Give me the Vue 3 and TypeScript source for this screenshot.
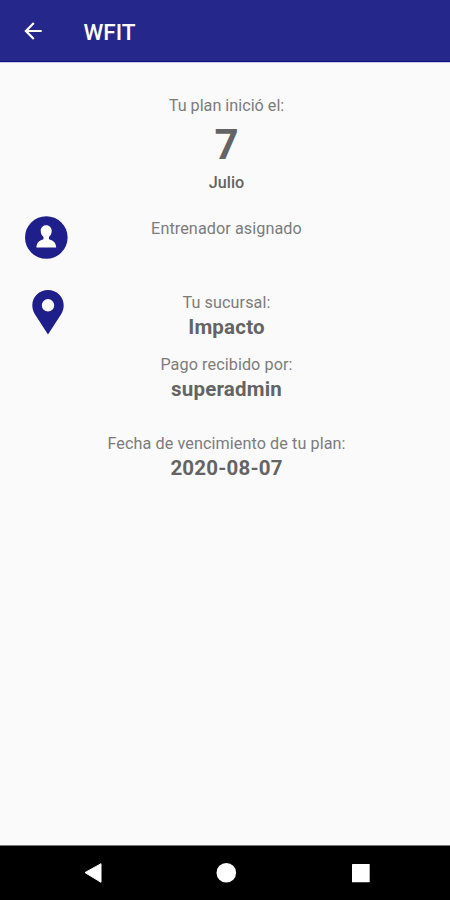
<script setup lang="ts">
const title: string = 'WFIT'
</script>

<template>
  <div class="screen">
    <header class="bar">
      <svg class="back" viewBox="0 0 24 24"><path d="M20 11H7.830l5.590-5.590L12 4l-8 8 8 8 1.410-1.410L7.830 13H20z" /></svg>
      <h1>{{ title }}</h1>
    </header>
    <main>
      <section class="start">
        <p class="label">Tu plan inició el:</p>
        <p class="day">7</p>
        <p class="month">Julio</p>
      </section>
      <section class="row trainer">
        <svg class="user" viewBox="0 0 43 43">
          <circle cx="21.300" cy="21.500" r="21.300" fill="#1f1f8b" />
          <path fill="#fff" d="M21.200 9.300c3.400 0 5.500 2.400 5.500 5.800 0 2.500-1.200 4.700-2.700 5.900v2.200c3.700 1.100 6.900 2.700 7.200 8.300H11.400c.3-5.600 3.400-7.200 7.100-8.300v-2.200c-1.600-1.200-2.800-3.400-2.800-5.900 0-3.400 2.100-5.800 5.500-5.800z" />
        </svg>
        <p class="label">Entrenador asignado</p>
      </section>
      <section class="row branch">
        <svg class="pin" viewBox="0 0 32 45"><path fill-rule="evenodd" d="M16 0C7.200 0 .3 6.700.3 15.200c0 3.300 1 6.200 2.600 9L16 44.500l13.100-20.300c1.600-2.800 2.600-5.700 2.600-9C31.700 6.700 24.800 0 16 0zM16 9.100a6.200 6.200 0 1 1 0 12.400 6.200 6.200 0 0 1 0-12.400z" /></svg>
        <div>
          <p class="label">Tu sucursal:</p>
          <p class="value">Impacto</p>
        </div>
      </section>
      <section class="pay">
        <p class="label">Pago recibido por:</p>
        <p class="value">superadmin</p>
      </section>
      <section class="due">
        <p class="label">Fecha de vencimiento de tu plan:</p>
        <p class="value">2020-08-07</p>
      </section>
    </main>
    <nav>
      <svg viewBox="0 0 450 55">
        <path d="M85 27.600 101 18.700v18.600z" stroke="#fff" stroke-width="1" stroke-linejoin="round" />
        <circle cx="226.300" cy="27.800" r="9.800" />
        <rect x="352" y="19" width="17.700" height="18.300" rx=".5" />
      </svg>
    </nav>
  </div>
</template>

<style>
body { margin: 0; }
</style>
<style scoped>
.screen { width: 450px; height: 900px; display: flex; flex-direction: column; background: #fafafa; font-family: Roboto, sans-serif; color: #646464; overflow: hidden; }
.bar { height: 62px; flex: none; background: #25278b; border-bottom: 1px solid #c9c9e6; box-shadow: inset 0 -1px #11117b; display: flex; align-items: center; box-sizing: content-box; padding-left: 20px; color: #fff; }
.back { width: 26px; height: 26px; fill: #fff; }
h1 { margin: 1px 0 0 37.500px; font-size: 22.500px; font-weight: 500; }
main { flex: 1; padding-top: 33px; }
p { margin: 0; text-align: center; white-space: nowrap; }
section { padding-left: 3px; }
.label { font-size: 16.200px; line-height: 20px; letter-spacing: .08px; color: #7c7c7c; }
.start .label { letter-spacing: 0; }
.day { font-size: 42px; line-height: 58px; height: 57px; font-weight: 700; }
.month { font-size: 16.200px; line-height: 20px; font-weight: 500; }
.value { font-size: 20.500px; line-height: 29px; font-weight: 700; letter-spacing: .2px; }
.row { display: grid; grid-template-columns: 90px 1fr 90px; }
.trainer { height: 74px; margin-top: 23px; }
.user { width: 43px; height: 43px; margin-left: 22px; }
.trainer .label { margin-top: 3px; }
.branch { height: 65px; }
.branch .label { margin-top: 3px; }
.pin { width: 32px; height: 45px; margin-left: 28.500px; fill: #1f1f8b; }
.pay { height: 79px; }
nav { height: 55px; flex: none; background: #000; border-top: 1px solid #777; box-sizing: border-box; }
nav svg { display: block; width: 450px; height: 55px; margin-top: -1px; fill: #fff; }
</style>
